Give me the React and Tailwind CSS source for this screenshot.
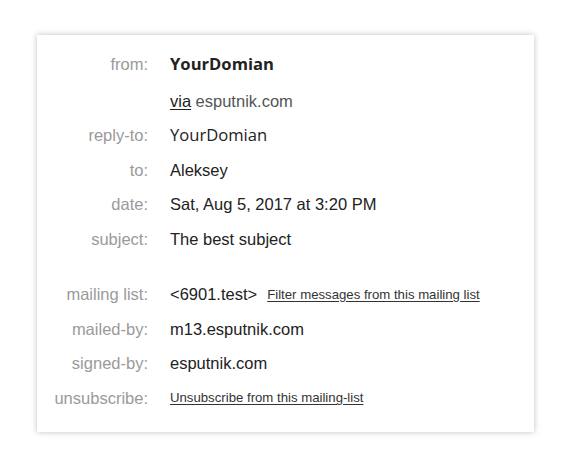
import React from 'react';

const ROWS = [
  { label: 'reply-to:', value: 'YourDomian', open: true },
  { label: 'to:', value: 'Aleksey' },
  { label: 'date:', value: 'Sat, Aug 5, 2017 at 3:20 PM' },
  { label: 'subject:', value: 'The best subject' },
];

const ROWS2 = [
  { label: 'mailed-by:', value: 'm13.esputnik.com' },
  { label: 'signed-by:', value: 'esputnik.com' },
];

function Row({ label, children, className = '' }) {
  return (
    <div className={`flex items-center h-[34.5px] ${className}`}>
      <div className="w-[111px] shrink-0 text-right text-[#9a9a9a]">{label}</div>
      <div className="pl-[22px] flex items-center text-[#222]">{children}</div>
    </div>
  );
}

export default function App() {
  return (
    <div className="w-[575px] h-[465px] bg-white pl-[37px] pt-[35px] font-['Liberation_Sans',Arial,sans-serif] text-[16.5px]">
      <div className="w-[497px] h-[397px] bg-white shadow-[0_0_6px_rgba(0,0,0,0.25)] pt-[11.75px]">
        <Row label="from:" className="mb-[2.5px]">
          <span className="font-['Open_Sans',sans-serif] font-bold text-[16.6px] text-[#222]">YourDomian</span>
        </Row>
        <Row label="">
          <span className="underline underline-offset-2 text-[#222]">via</span>
          <span className="ml-[4.5px] text-[#555]">esputnik.com</span>
        </Row>
        {ROWS.map((r) => (
          <Row key={r.label} label={r.label}>
            <span className={r.open ? "font-['Open_Sans',sans-serif] text-[16.6px]" : ''}>{r.value}</span>
          </Row>
        ))}
        <div className="h-[21px]" />
        <Row label="mailing list:">
          <span>&lt;6901.test&gt;</span>
          <span className="ml-[10px] text-[13.2px] text-[#333] underline underline-offset-2">
            Filter messages from this mailing list
          </span>
        </Row>
        {ROWS2.map((r) => (
          <Row key={r.label} label={r.label}>
            <span>{r.value}</span>
          </Row>
        ))}
        <Row label="unsubscribe:">
          <span className="text-[13.2px] text-[#333] underline underline-offset-2">
            Unsubscribe from this mailing-list
          </span>
        </Row>
      </div>
    </div>
  );
}
